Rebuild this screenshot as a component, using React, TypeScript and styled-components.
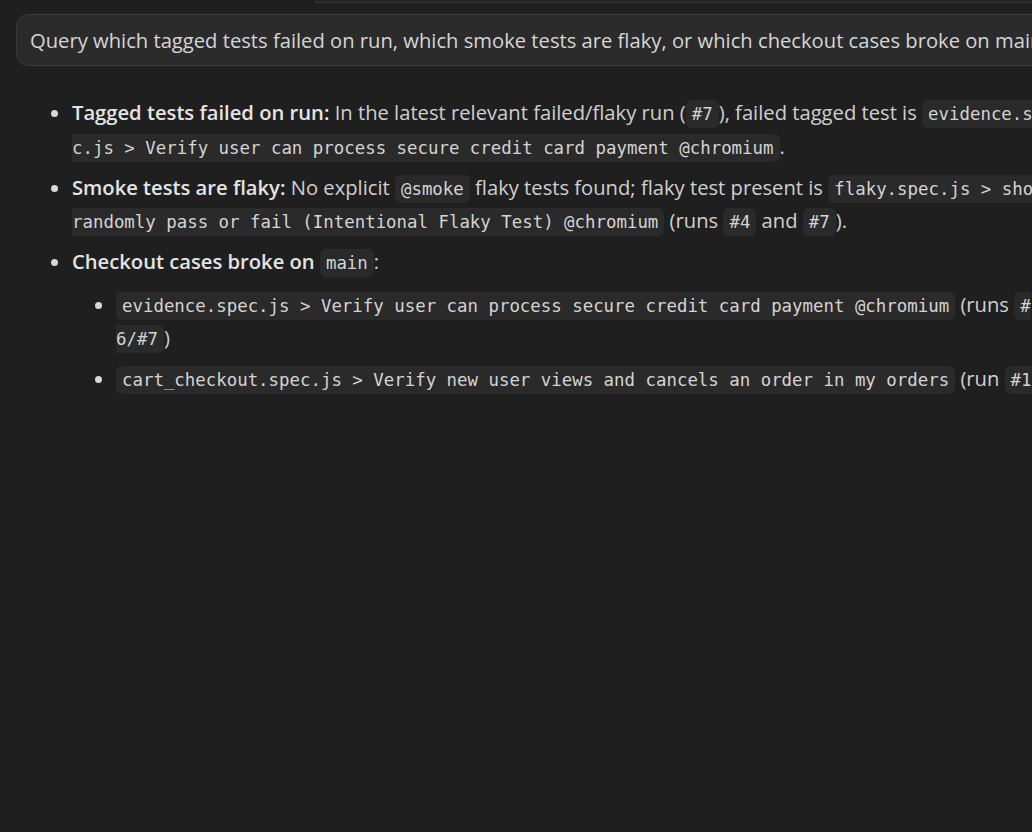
import React from "react";
import styled, { createGlobalStyle } from "styled-components";

const GlobalStyle = createGlobalStyle`
  html, body {
    margin: 0;
    padding: 0;
    background: #1f1f1f;
    overflow: hidden;
  }
  body {
    font-family: "Open Sans", "Noto Sans", "Liberation Sans", sans-serif;
    color: #cccccc;
  }
`;

const Page = styled.div`
  width: 1200px;
  height: 832px;
  padding-left: 16px;
  box-sizing: border-box;
`;

const PrevBlock = styled.div`
  margin-left: 299px;
  height: 2px;
  background: #252525;
  border: 1px solid #3a3a3a;
  border-top: none;
  border-bottom-left-radius: 2px;
`;

const Bubble = styled.div`
  margin-top: 11px;
  box-sizing: border-box;
  height: 52px;
  display: flex;
  align-items: center;
  padding: 0 13px;
  background: #2b2b2b;
  border: 1px solid #3b3b3b;
  border-radius: 12px;
  font-size: 20.2px;
  color: #d6d6d6;
  white-space: nowrap;
  overflow: hidden;
`;

const List = styled.ul<{ $nested?: boolean }>`
  list-style: disc;
  margin: ${(p) => (p.$nested ? "9px 0 0" : "30px 0 0")};
  padding-left: ${(p) => (p.$nested ? "44px" : "56px")};
  font-size: 20.2px;
  line-height: 33.5px;
  white-space: nowrap;
  color: #cfcfcf;
`;

const Item = styled.li`
  & + & {
    margin-top: 7.5px;
  }
  &::marker {
    color: #d8d8d8;
  }
`;

const Label = styled.strong`
  font-weight: 600;
  color: #e4e4e4;
`;

const Code = styled.code`
  font-family: "DejaVu Sans Mono", "Liberation Mono", monospace;
  font-size: 17.4px;
  line-height: 20px;
  color: #d4d4d4;
  background: #2a2a2a;
  padding: 4px 6px;
  border-radius: 6px;
`;

export default function App() {
  return (
    <>
      <GlobalStyle />
      <Page>
        <PrevBlock />
        <Bubble>
          Query which tagged tests failed on run, which smoke tests are flaky, or which checkout cases broke on main
        </Bubble>
        <List>
          <Item>
            <Label>Tagged tests failed on run:</Label> In the latest relevant failed/flaky run (<Code>#7</Code>), failed tagged
            test is{" "}
            <Code>
              evidence.spe
              <br />
              c.js &gt; Verify user can process secure credit card payment @chromium
            </Code>
            .
          </Item>
          <Item>
            <Label>Smoke tests are flaky:</Label> No explicit <Code>@smoke</Code> flaky tests found; flaky test present is{" "}
            <Code>
              flaky.spec.js &gt; should
              <br />
              randomly pass or fail (Intentional Flaky Test) @chromium
            </Code>{" "}
            (runs <Code>#4</Code> and <Code>#7</Code>).
          </Item>
          <Item>
            <Label>Checkout cases broke on</Label> <Code>main</Code>:
            <List $nested>
              <Item>
                <Code>evidence.spec.js &gt; Verify user can process secure credit card payment @chromium</Code> (runs{" "}
                <Code>
                  #
                  <br />
                  6/#7
                </Code>
                )
              </Item>
              <Item>
                <Code>cart_checkout.spec.js &gt; Verify new user views and cancels an order in my orders</Code> (run{" "}
                <Code>#1</Code>)
              </Item>
            </List>
          </Item>
        </List>
      </Page>
    </>
  );
}
